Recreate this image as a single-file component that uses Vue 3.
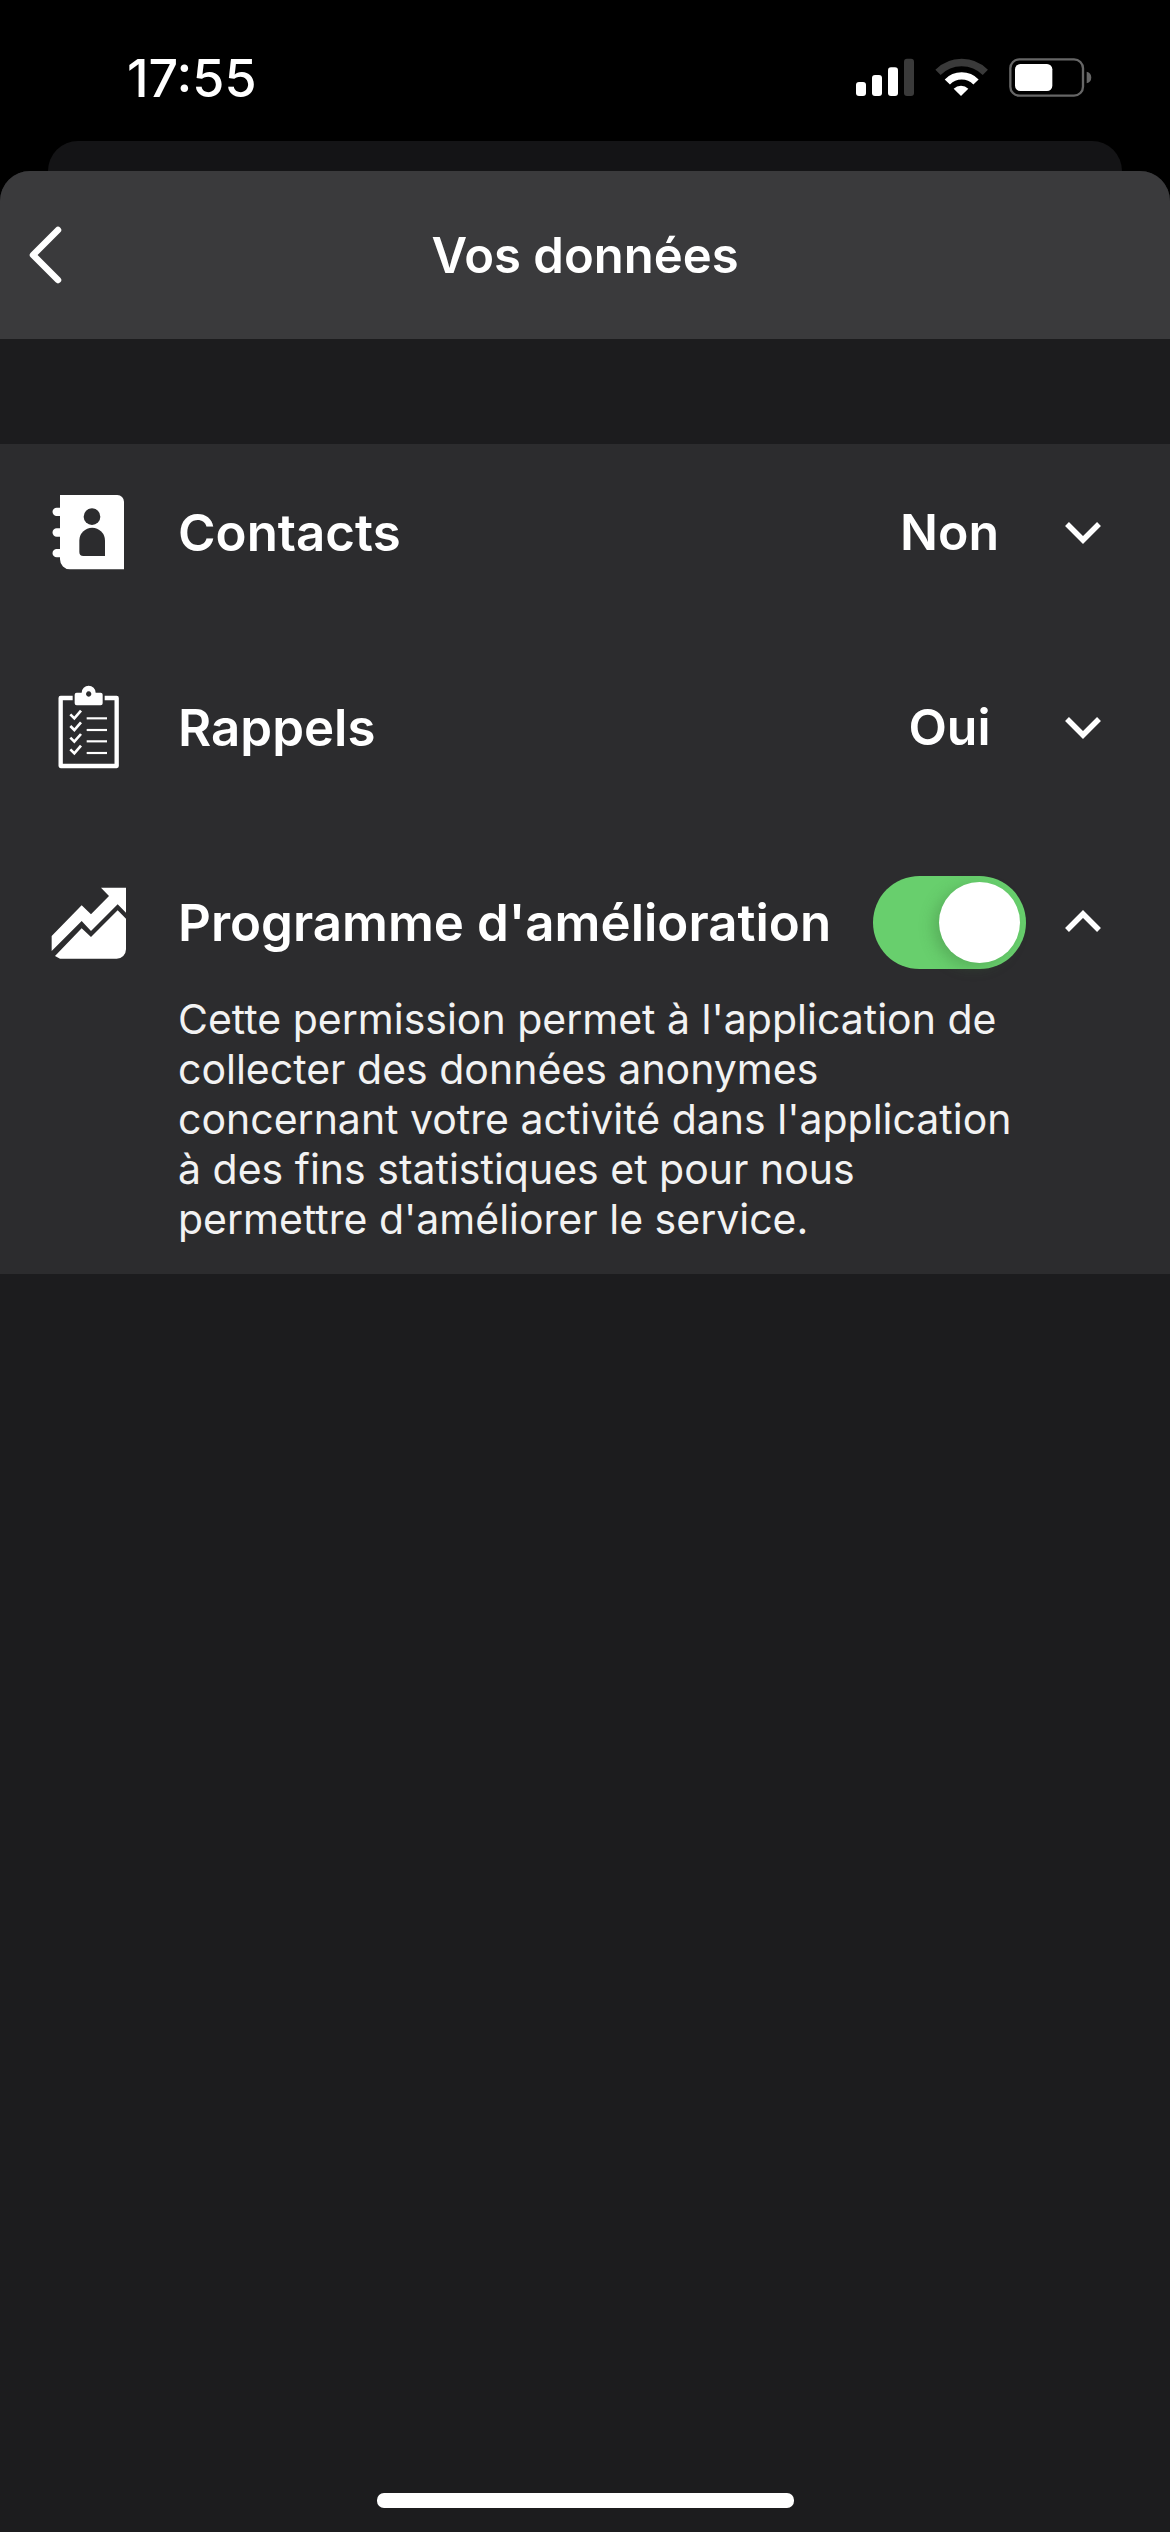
<template>
  <div class="screen">
    <div class="status">
      <span class="time">17:55</span>
      <svg class="status-icons" viewBox="0 0 840 240">
        <rect x="78" y="126" width="30" height="42" rx="9" fill="#fff" />
        <rect x="126" y="105" width="30" height="63" rx="9" fill="#fff" />
        <rect x="174" y="82" width="30" height="86" rx="9" fill="#fff" />
        <rect x="222" y="56" width="30" height="112" rx="9" fill="#3a3a3a" />
        <path d="M324 97A100 100 0 0 1 466 97" fill="none" stroke="#3a3a3a" stroke-width="22" />
        <path d="M352 126A60 60 0 0 1 438 126" fill="none" stroke="#fff" stroke-width="22" />
        <path d="M393 168L371 146A32 32 0 0 1 415 146Z" fill="#fff" />
        <rect x="541" y="58" width="218" height="109" rx="27" fill="none" stroke="#666" stroke-width="7" />
        <rect x="555" y="72" width="112" height="81" rx="16" fill="#fff" />
        <path d="M770 95A18 18 0 0 1 770 130Z" fill="#666" />
      </svg>
    </div>
    <div class="behind"></div>
    <div class="sheet">
      <header class="header">
        <svg class="back" viewBox="0 0 40 60">
          <path d="M33 5L8 30L33 55" fill="none" stroke="#fff" stroke-width="6.500" stroke-linecap="round" stroke-linejoin="round" />
        </svg>
        <h1>Vos données</h1>
      </header>
      <section class="list">
        <div class="row">
          <svg class="icon" viewBox="60 42 240 288">
            <path fill="#fff" fill-rule="evenodd" d="M90 75H262a20 20 0 0 1 20 20V298H120a30 30 0 0 1-30-30V262H80a12.500 12.500 0 0 1 0-25H90V200H80a12.500 12.500 0 0 1 0-25H90V138H80a12.500 12.500 0 0 1 0-25H90Z" />
            <circle cx="186" cy="140" r="25" fill="#2c2c2e" />
            <path fill="#2c2c2e" d="M148 212a38.500 39 0 0 1 77 0V258H160a12 12 0 0 1-12-12Z" />
          </svg>
          <span class="label">Contacts</span>
          <span class="value">Non</span>
          <svg class="chev" viewBox="0 0 36 24"><path d="M2 4L18 20L34 4" /></svg>
        </div>
        <div class="row">
          <svg class="icon" viewBox="60 27 240 288">
            <path fill="none" stroke="#fff" stroke-width="13" stroke-linejoin="round" d="M128 84H92V288H260V84H224" />
            <path fill="#fff" fill-rule="evenodd" d="M140 68H155A21 21 0 0 1 197 68H212a6 6 0 0 1 6 6V100a6 6 0 0 1-6 6H140a6 6 0 0 1-6-6V74a6 6 0 0 1 6-6ZM176 64a8 8 0 1 0 .1 0Z" />
            <g fill="none" stroke="#fff" stroke-width="8">
              <path d="M121 133L133 145L153 122" />
              <path d="M121 168L133 180L153 157" />
              <path d="M121 203L133 215L153 192" />
              <path d="M121 238L133 250L153 227" />
            </g>
            <g fill="none" stroke="#fff" stroke-width="6.500">
              <path d="M170 145H231" />
              <path d="M170 180H231" />
              <path d="M170 214H231" />
              <path d="M170 249H231" />
            </g>
          </svg>
          <span class="label">Rappels</span>
          <span class="value">Oui</span>
          <svg class="chev" viewBox="0 0 36 24"><path d="M2 4L18 20L34 4" /></svg>
        </div>
        <div class="row">
          <svg class="icon" viewBox="60 9 240 288">
            <path fill="#fff" d="M65 195L155 103L183 130L237 75L213 50H288V125L263 100L183 180L155 150L65 240Z" />
            <path fill="#fff" d="M75 255L155 172L183 198L263 118L288 143V235A28 28 0 0 1 260 263H90Z" />
          </svg>
          <span class="label">Programme d'amélioration</span>
          <div class="toggle"><span class="knob"></span></div>
          <svg class="chev" viewBox="0 0 36 24"><path d="M2 20L18 4L34 20" /></svg>
        </div>
        <p class="desc">Cette permission permet à l'application de<br />collecter des données anonymes<br />concernant votre activité dans l'application<br />à des fins statistiques et pour nous<br />permettre d'améliorer le service.</p>
      </section>
      <div class="home"></div>
    </div>
  </div>
</template>

<script setup>
</script>

<style>
html, body { margin: 0; background: #000; }
</style>

<style scoped>
.screen { width: 1170px; height: 2532px; background: #000; display: flex; flex-direction: column; font-family: Inter, "Liberation Sans", sans-serif; color: #fff; overflow: hidden; }
.status { height: 141px; box-sizing: border-box; padding: 40px 60px 0 127px; display: flex; justify-content: space-between; align-items: flex-start; flex: none; }
.time { font-size: 52px; font-weight: 500; line-height: 78px; }
.status-icons { width: 280px; height: 80px; }
.behind { height: 30px; margin: 0 48px; background: #141416; border-radius: 30px 30px 0 0; flex: none; }
.sheet { flex: 1; background: #1c1c1e; border-radius: 30px 30px 0 0; display: flex; flex-direction: column; overflow: hidden; }
.header { height: 168px; background: #3a3a3c; display: flex; align-items: center; justify-content: center; position: relative; flex: none; }
.header h1 { margin: 0; font-size: 49px; font-weight: 600; }
.back { position: absolute; left: 25px; top: 54px; width: 40px; height: 60px; }
.list { margin-top: 105px; background: #2c2c2e; padding: 40px 30px 30px 50px; display: flex; flex-direction: column; gap: 99px; }
.row { height: 96px; display: flex; align-items: center; }
.icon { width: 80px; height: 96px; margin-right: 48px; flex: none; }
.label { flex: 1; font-size: 51px; font-weight: 600; white-space: nowrap; }
.value { width: 153px; text-align: center; font-size: 50px; font-weight: 600; }
.chev { width: 36px; height: 24px; margin-left: 39px; margin-right: 39px; flex: none; }
.chev path { fill: none; stroke: #fff; stroke-width: 5.500; }
.toggle { width: 153px; height: 93px; border-radius: 47px; background: #68cf6d; position: relative; flex: none; }
.knob { position: absolute; left: 66px; top: 6px; width: 81px; height: 81px; border-radius: 50%; background: #fff; box-shadow: -6px 4px 14px rgba(60, 120, 60, .35); }
.desc { margin: -75px 0 0 128px; font-size: 41px; line-height: 50px; font-weight: 400; color: #f2f2f2; white-space: nowrap; }
.home { width: 417px; height: 15px; border-radius: 7px; background: #fff; margin: auto auto 24px; flex: none; }
</style>
